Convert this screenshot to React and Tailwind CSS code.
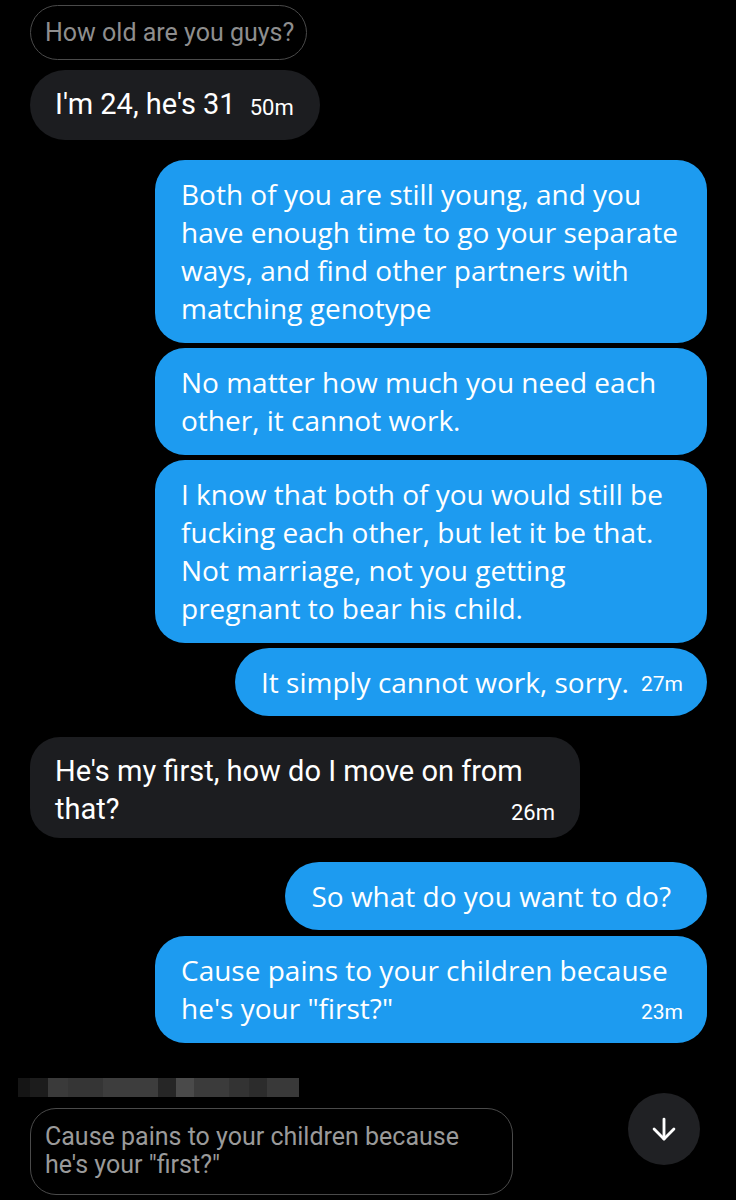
import { ArrowDown } from "lucide-react";

const roboto = { fontFamily: "Roboto, 'Noto Sans', sans-serif" };
const chirp = { fontFamily: "'Open Sans', 'Noto Sans', sans-serif" };

const blurBlocks = [
    ["#151515", 12], ["#1c1c1c", 18], ["#3a3a3a", 20], ["#353535", 35], ["#3d3d3d", 55],
    ["#262626", 18], ["#4a4a4a", 18], ["#3b3b3b", 35], ["#333333", 20], ["#2c2c2c", 18], ["#393939", 32],
];

export default function App() {
    return (
        <div className="w-[736px] h-[1200px] bg-black overflow-hidden relative" style={roboto}>
            {/* quoted message */}
            <div className="flex">
                <div className="ml-[30px] mt-[5px] h-[55px] border border-[#4a4a4a] rounded-[28px] flex items-center pl-[14px] pr-[12px] text-[25px] text-[#8e8e8e]">
                    How old are you guys?
                </div>
            </div>

            <div className="flex">
                <div className="ml-[30px] mt-[10px] h-[70px] bg-[#1c1d20] rounded-[35px] flex items-center pl-[25px] pr-[26px] text-white">
                    <span className="text-[29px]">I'm 24, he's 31</span>
                    <span className="text-[22px] ml-[14px] mt-[5px]">50m</span>
                </div>
            </div>

            <div className="flex flex-col items-end pr-[29px] mt-[20px] gap-[5px] text-[28px]" style={chirp}>
                <div className="w-[552px] bg-[#1d9bf0] text-white rounded-[30px] pl-[26px] pt-[15px] pb-[16px]">
                    <div className="leading-[38px]">Both of you are still young, and you</div>
                    <div className="leading-[38px]">have enough time to go your separate</div>
                    <div className="leading-[38px]">ways, and find other partners with</div>
                    <div className="leading-[38px]">matching genotype</div>
                </div>
                <div className="w-[552px] bg-[#1d9bf0] text-white rounded-[30px] pl-[26px] pt-[15px] pb-[16px]">
                    <div className="leading-[38px]">No matter how much you need each</div>
                    <div className="leading-[38px]">other, it cannot work.</div>
                </div>
                <div className="w-[552px] bg-[#1d9bf0] text-white rounded-[30px] pl-[26px] pt-[15px] pb-[16px]">
                    <div className="leading-[38px]">I know that both of you would still be</div>
                    <div className="leading-[38px]">fucking each other, but let it be that.</div>
                    <div className="leading-[38px]">Not marriage, not you getting</div>
                    <div className="leading-[38px]">pregnant to bear his child.</div>
                </div>
                <div className="h-[68px] bg-[#1d9bf0] text-white rounded-[34px] pl-[26px] pr-[24px] flex items-center">
                    <span>It simply cannot work, sorry.</span>
                    <span className="text-[21px] ml-[12px] mt-[5px]" style={roboto}>27m</span>
                </div>
            </div>

            <div className="ml-[30px] mt-[21px] w-[550px] bg-[#1c1d20] text-white rounded-[30px] pl-[25px] pr-[25px] pt-[15px] pb-[10px] text-[29px]">
                <div className="leading-[38px]">He's my first, how do I move on from</div>
                <div className="leading-[38px] flex justify-between items-end">
                    <span>that?</span>
                    <span className="text-[22px] leading-[30px]">26m</span>
                </div>
            </div>

            <div className="flex flex-col items-end pr-[29px] mt-[24px] gap-[6px] text-[28px]" style={chirp}>
                <div className="h-[68px] bg-[#1d9bf0] text-white rounded-[34px] pl-[26px] pr-[36px] flex items-center">
                    So what do you want to do?
                </div>
                <div className="w-[552px] bg-[#1d9bf0] text-white rounded-[30px] pl-[26px] pr-[24px] pt-[15px] pb-[16px]">
                    <div className="leading-[38px]">Cause pains to your children because</div>
                    <div className="leading-[38px] flex justify-between items-end">
                        <span>he's your "first?"</span>
                        <span className="text-[21px] leading-[30px]" style={roboto}>23m</span>
                    </div>
                </div>
            </div>

            {/* blurred name */}
            <div className="ml-[18px] mt-[35px] h-[19px] flex">
                {blurBlocks.map(([c, w], i) => (
                    <div key={i} className="h-full" style={{ background: c, width: w }} />
                ))}
            </div>

            <div className="flex items-start justify-between mt-[11px] pl-[30px] pr-[36px]">
                <div className="w-[483px] h-[87px] border border-[#4a4a4a] rounded-[26px] pl-[14px] pt-[14px] text-[25px] text-[#9a9a9a]">
                    <div className="leading-[28px]">Cause pains to your children because</div>
                    <div className="leading-[28px]">he's your "first?"</div>
                </div>
            </div>

            <div className="absolute left-[628px] top-[1093px] w-[72px] h-[72px] rounded-full bg-[#202124] flex items-center justify-center text-white">
                <ArrowDown size={34} strokeWidth={2} />
            </div>
        </div>
    );
}
